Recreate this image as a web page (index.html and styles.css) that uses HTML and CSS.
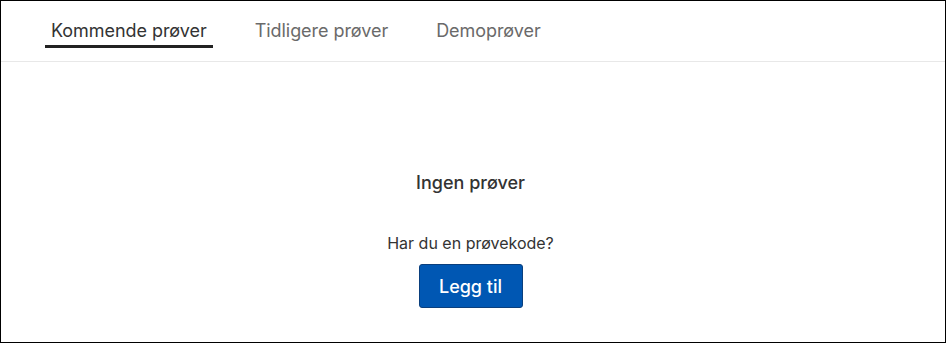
FILE: index.html
```html
<!DOCTYPE html>
<html lang="no">
<head>
<meta charset="utf-8">
<title>Prøver</title>
<link rel="stylesheet" href="styles.css">
</head>
<body>
<div class="frame">
  <nav class="tabs">
    <a class="tab active" href="#">Kommende prøver</a>
    <a class="tab" href="#">Tidligere prøver</a>
    <a class="tab" href="#">Demoprøver</a>
  </nav>
  <main class="empty">
    <h2 class="empty-title">Ingen prøver</h2>
    <p class="empty-text">Har du en prøvekode?</p>
    <button class="btn-primary" type="button">Legg til</button>
  </main>
</div>
</body>
</html>
```
FILE: styles.css
```css
* { box-sizing: border-box; }
html, body { margin: 0; padding: 0; background: #fff; }
body { font-family: Inter, "Noto Sans", sans-serif; }
.frame {
  width: 946px;
  height: 343px;
  border: 1px solid #000;
  display: flex;
  flex-direction: column;
}
.tabs {
  display: flex;
  gap: 36px;
  padding: 0 0 0 44px;
  border-bottom: 1px solid #e8e8e8;
  height: 61px;
}
.tab {
  display: block;
  padding: 19px 6px 0;
  height: 47px;
  font-size: 18px;
  color: #6a6a6a;
  text-decoration: none;
  letter-spacing: -0.05px;
}
.tab.active {
  color: #333;
  border-bottom: 3px solid #222;
}
.empty {
  flex: 1;
  display: flex;
  flex-direction: column;
  align-items: center;
  padding: 110px 5px 0 0;
}
.empty-title {
  margin: 0;
  font-size: 18px;
  font-weight: 500;
  color: #333;
  line-height: 22px;
}
.empty-text {
  margin: 39px 0 0;
  font-size: 16px;
  color: #333;
  line-height: 20px;
}
.btn-primary {
  margin-top: 11px;
  width: 104px;
  height: 44px;
  background: #0057b3;
  border: 1px solid #0a3f7d;
  border-radius: 3px;
  color: #fff;
  font-family: inherit;
  font-size: 18px;
  font-weight: 500;
}
```
